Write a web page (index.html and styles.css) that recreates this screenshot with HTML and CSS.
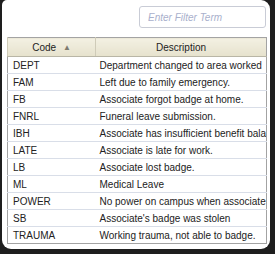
FILE: index.html
```html
<!DOCTYPE html>
<html lang="en">
    <head>
        <meta charset="UTF-8">
        <title>Reason Codes</title>
        <link rel="stylesheet" href="styles.css">
    </head>
    <body>
        <div class="popup">
            <input class="filter" type="text" placeholder="Enter Filter Term">
            <table class="codes">
                <thead>
                    <tr>
                        <th class="code-col">Code <span class="sort">&#9650;</span></th>
                        <th>Description</th>
                    </tr>
                </thead>
                <tbody>
                    <tr><td>DEPT</td><td>Department changed to area worked</td></tr>
                    <tr><td>FAM</td><td>Left due to family emergency.</td></tr>
                    <tr><td>FB</td><td>Associate forgot badge at home.</td></tr>
                    <tr><td>FNRL</td><td>Funeral leave submission.</td></tr>
                    <tr><td>IBH</td><td>Associate has insufficient benefit balance</td></tr>
                    <tr><td>LATE</td><td>Associate is late for work.</td></tr>
                    <tr><td>LB</td><td>Associate lost badge.</td></tr>
                    <tr><td>ML</td><td>Medical Leave</td></tr>
                    <tr><td>POWER</td><td>No power on campus when associate tried to badge</td></tr>
                    <tr><td>SB</td><td>Associate's badge was stolen</td></tr>
                    <tr><td>TRAUMA</td><td>Working trauma, not able to badge.</td></tr>
                </tbody>
            </table>
        </div>
    </body>
</html>
```
FILE: styles.css
```css
body{
    margin: 0;
    width: 275px;
    height: 254px;
    overflow: hidden;
    background: #1e1e1e;
    font-family: "Liberation Sans", Arial, sans-serif;
    font-size: 10px;
    color: #222;
}

.popup{
    margin: 0 5px 0 2px;
    height: 249px;
    box-sizing: border-box;
    background: #fff;
    border-radius: 5px 9px 9px 9px;
    padding: 6px 3px 0 5px;
    display: flex;
    flex-direction: column;
}

.filter{
    align-self: flex-end;
    width: 127px;
    height: 22px;
    box-sizing: border-box;
    margin: 0 1px 0 0;
    padding: 0 8px;
    border: 1px solid #c9ccd6;
    border-radius: 3px;
    font-family: "Liberation Sans", Arial, sans-serif;
    font-size: 10px;
    outline: none;
}

.filter::placeholder{
    color: #a9b0cc;
    font-style: italic;
}

.codes{
    margin-top: 9px;
    width: 260px;
    border-collapse: collapse;
    border: 1px solid #a3a3a3;
    table-layout: fixed;
}

.codes th{
    height: 18px;
    padding: 0;
    font-weight: normal;
    text-align: center;
    background: linear-gradient(#f3f0e2, #e6e2cd);
    border-bottom: 1px solid #b9b6a6;
    border-left: 1px solid #cfcbb8;
}

.codes th.code-col{
    width: 87px;
}

.sort{
    font-size: 8px;
    color: #7d7a6e;
    vertical-align: 1px;
    margin-left: 4px;
}

.codes td{
    height: 16px;
    padding: 0 0 0 5px;
    white-space: nowrap;
    overflow: hidden;
    border-bottom: 1px solid #d9dee8;
}

.codes td + td{
    padding-left: 4px;
}

.codes tr:last-child td{
    border-bottom: none;
}
```
